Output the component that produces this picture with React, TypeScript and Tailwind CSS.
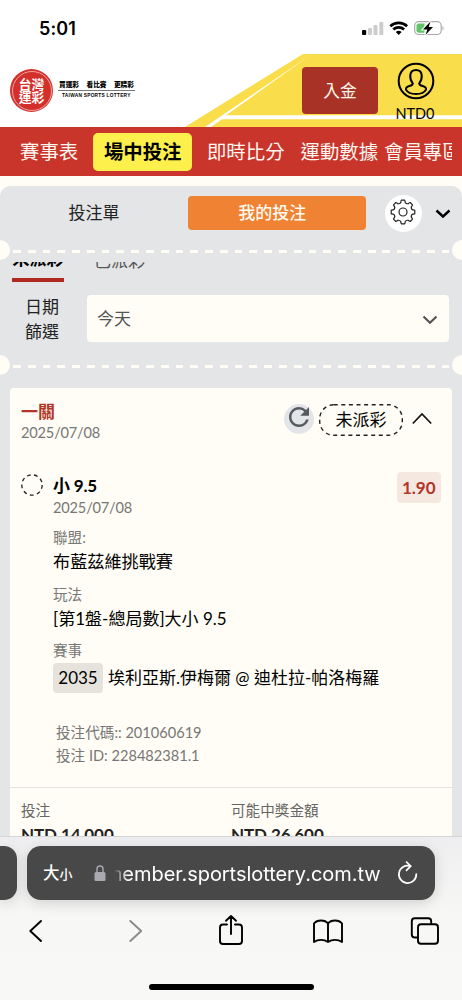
import React from "react";

const polar = (deg: number, r: number) => {
  const a = (deg * Math.PI) / 180;
  return `${(13 + r * Math.cos(a)).toFixed(2)} ${(13 + r * Math.sin(a)).toFixed(2)}`;
};

const gearPath =
  Array.from({ length: 8 }, (_, i) => {
    const a = i * 45;
    return `${i === 0 ? "M" : "L"}${polar(a - 8, 11.9)}L${polar(a + 8, 11.9)}Q${polar(a + 12, 11)} ${polar(a + 12, 10)}Q${polar(a + 22.5, 8.4)} ${polar(a + 33, 10)}Q${polar(a + 33, 11)} ${polar(a + 37, 11.9)}`;
  }).join("") + "z";

const Notches = () => (
  <div className="relative flex h-5 items-center overflow-hidden">
    <span className="h-5 w-2.5 rounded-r-full bg-[#fffdf5]" />
    <span className="mt-[2px] ml-[2.7px] h-[3px] w-[438px] bg-[repeating-linear-gradient(90deg,#fffdf5_0px,#fffdf5_7.8px,transparent_7.8px,transparent_14.78px)]" />
    <span className="absolute right-0 h-5 w-2.5 rounded-l-full bg-[#fffdf5]" />
  </div>
);

const StatusBar = () => (
  <div className="flex h-[54px] shrink-0 items-start justify-between bg-white pl-[39px] pr-[18px]">
    <span className="mt-[16px] font-['Inter'] text-[18px] leading-[26px] font-semibold tracking-[0.1px] text-black">5:01</span>
    <svg className="mt-[18px]" width="82" height="20" viewBox="362 18 82 20">
      <rect x="362" y="30" width="4.200" height="5" rx="1" fill="#000" />
      <rect x="368" y="28" width="4" height="7" rx="1" fill="#ccc" />
      <rect x="373.500" y="25" width="4" height="10" rx="1" fill="#ccc" />
      <rect x="379.300" y="22" width="4" height="13" rx="1" fill="#ccc" />
      <g fill="none" stroke="#000" strokeWidth="2.700">
        <path d="M390.300 26.200a12.300 12.300 0 0 1 16.800 0" />
        <path d="M393.300 29.500a7.900 7.900 0 0 1 10.800 0" />
      </g>
      <path d="M395.800 32.100a4.200 4.200 0 0 1 5.800 0L398.700 35z" fill="#000" />
      <rect x="414.700" y="21.700" width="26.500" height="12.800" rx="4" fill="#fff" stroke="#aaa" strokeWidth="1.200" />
      <path d="M419 23.500h5.500v9.200h-5.500a2.500 2.500 0 0 1-2.500-2.500v-4.200a2.500 2.500 0 0 1 2.500-2.500z" fill="#5fc466" />
      <path d="M442.500 26v4.400c1.500-.7 1.500-3.700 0-4.400z" fill="#aaa" />
      <path d="M430.500 21.500l-7.500 8h4.300l-1.800 5.500 7.500-8h-4.300z" fill="#000" stroke="#fff" strokeWidth="2.200" paintOrder="stroke" />
    </svg>
  </div>
);

const Header = () => (
  <header className="relative flex h-[73px] shrink-0 bg-white">
    <svg className="absolute inset-0" width="462" height="73" viewBox="0 54 462 73">
      <path d="M303 54H462V127H185z" fill="#fadd4a" />
      <path d="M312 54L226 115.300H462V119.200H222L211 127H205z" fill="#fff" />
    </svg>
    <div className="relative ml-[10px] mt-[15px] flex h-[43px] w-[43px] flex-col items-center rounded-full bg-[#d32f2b] pt-[8px] font-['Noto_Sans_CJK_TC',sans-serif] text-[12.800px] leading-[13px] font-bold text-white">
      <span className="absolute inset-[1.5px] rounded-full border border-[#f0a5a0]" />
      <span>台灣</span>
      <span>運彩</span>
    </div>
    <div className="relative ml-[5px] mt-[21px] w-[77px] font-['Noto_Sans_CJK_TC',sans-serif] text-black">
      <div className="flex h-[16px] items-center justify-between border-b border-[#777] px-[1px] pt-[2px] text-[6.700px] leading-[14px] font-black whitespace-nowrap">
        <span>買運彩</span>
        <span>看比賽</span>
        <span>更精彩</span>
      </div>
      <div className="pl-[4px] font-['Liberation_Sans'] text-[4.800px] leading-[9px] font-bold tracking-[0.260px] whitespace-nowrap">TAIWAN SPORTS LOTTERY</div>
    </div>
    <button className="relative ml-[167px] mt-[13px] h-[47px] w-[76px] rounded-[4px] bg-[#a83226] text-[16.800px] text-[#fff5ea]">入金</button>
    <div className="relative ml-[15px] mt-[8px] flex w-[44px] flex-col items-center">
      <svg className="ml-[2px] shrink-0" width="38" height="38" viewBox="0 0 38 38" fill="none" stroke="#000" strokeWidth="2">
        <circle cx="19" cy="19" r="17.300" />
        <path d="M15.800 21.500C13.800 19 13 16 13.300 13.200 13.600 9.800 15.800 8 19 8s5.400 1.800 5.700 5.200c.3 2.800-.5 5.800-2.500 8.300.2 1.500 1.300 1.900 3.300 2.500 2.700.8 4 2 3.500 3.600-1.600 3-5.600 4.400-10 4.400s-8.400-1.400-10-4.400c-.5-1.600.8-2.800 3.500-3.600 2-.6 3.100-1 3.300-2.500z" />
      </svg>
      <span className="mt-[5px] text-[14.500px] leading-[18px] text-black">NTD0</span>
    </div>
  </header>
);

const Nav = () => (
  <nav className="flex h-[49px] shrink-0 items-center overflow-hidden bg-[#c9342b] pr-[10px] text-[19.400px] whitespace-nowrap text-[#fff8f0]">
    <div className="flex w-[452px] items-center overflow-hidden">
      <span className="ml-[20px]">賽事表</span>
      <span className="ml-[15.300px] flex h-[38px] w-[98.500px] shrink-0 items-center justify-center rounded-[5px] bg-[#fef04c] font-bold text-black">場中投注</span>
      <span className="ml-[15px]">即時比分</span>
      <span className="ml-[16px]">運動數據</span>
      <span className="ml-[6px]">會員專區</span>
    </div>
  </nav>
);

const TicketTabs = () => (
  <div className="flex h-[54px] items-start pt-[10px]">
    <span className="w-[188px] text-center text-[17px] leading-[34px] text-[#222]">投注單</span>
    <span className="h-[34px] w-[177.500px] rounded-[4px] bg-[#ef8233] pr-[9px] text-center text-[17px] leading-[34px] font-medium text-[#fffaf0]">我的投注</span>
    <span className="-mt-[1.500px] ml-[19.500px] flex h-[37px] w-[37px] items-center justify-center rounded-full bg-white">
      <svg className="-mt-[2px] -ml-px" width="26" height="26" viewBox="0 0 26 26" fill="none" stroke="#222" strokeWidth="1.200" strokeLinejoin="round">
        <circle cx="13" cy="13" r="4" />
        <path d={gearPath} />
      </svg>
    </span>
    <svg className="ml-[13px] mt-[13px]" width="16" height="10" viewBox="0 0 16 10" fill="none" stroke="#000" strokeWidth="2.400">
      <path d="M1.500 1.500L8 7.500l6.500-6" />
    </svg>
  </div>
);

const Filters = () => (
  <>
    <div className="flex h-[21.500px] overflow-hidden">
      <div className="ml-[12px] h-[19.500px] w-[52px] overflow-hidden border-b-[4px] border-[#b02a20] text-center text-[17px] leading-[24px] font-bold text-black">
        <div className="-mt-[15px]">未派彩</div>
      </div>
      <div className="ml-[30px] text-[17px] leading-[24px] text-[#555]">
        <div className="-mt-[13px]">已派彩</div>
      </div>
    </div>
    <div className="flex h-[71.500px] items-start pt-[11.500px]">
      <div className="-mt-px ml-[25px] w-[62px] text-[17px] leading-[25px] text-[#222]">
        日期
        <br />
        篩選
      </div>
      <div className="flex h-[47px] w-[361.500px] items-center justify-between rounded-[4px] bg-[#fffdf5] pr-[11px] pl-[10px] text-[17px] text-[#555]">
        <span>今天</span>
        <svg className="mt-[2px]" width="16" height="10" viewBox="0 0 16 10" fill="none" stroke="#555" strokeWidth="2.200">
          <path d="M1.500 1.500L8 7.800l6.500-6.300" />
        </svg>
      </div>
    </div>
  </>
);

const Card = () => (
  <section className="mt-[13px] ml-[10px] w-[442.300px] rounded-t-[4px] bg-[#fffdf5]">
    <div className="flex h-[71px] items-start pt-[12px] pl-[11px]">
      <div className="w-[263px] pt-px">
        <div className="text-[17px] leading-[21px] font-bold text-[#b2362a]">一關</div>
        <div className="text-[14.600px] leading-[22px] tracking-[-0.180px] text-[#777]">2025/07/08</div>
      </div>
      <span className="mt-[4px] flex h-[30px] w-[30px] items-center justify-center rounded-full bg-[#e3e5e8]">
        <svg className="-mt-[4px] -ml-px shrink-0" width="30" height="30" viewBox="0 0 24 24">
          <path d="M17.650 6.350A7.960 7.960 0 0 0 12 4c-4.420 0-7.990 3.580-7.990 8s3.570 8 7.990 8c3.730 0 6.840-2.550 7.730-6h-2.080A5.990 5.990 0 0 1 12 18c-3.310 0-6-2.690-6-6s2.690-6 6-6c1.660 0 3.140.69 4.220 1.780L13 11h7V4z" fill="#555b5e" />
        </svg>
      </span>
      <span className="relative ml-[5px] mt-[4px] flex h-[32px] w-[84px] items-center justify-center text-[17px] text-black">
        <svg className="absolute inset-0" width="84" height="32" fill="none" stroke="#222" strokeWidth="1.400">
          <rect x=".7" y=".7" width="82.600" height="30.600" rx="14" strokeDasharray="4 3.600" />
        </svg>
        未派彩
      </span>
      <svg className="ml-[9px] mt-[12px]" width="20" height="14" viewBox="0 0 20 14" fill="none" stroke="#111" strokeWidth="1.700">
        <path d="M.8 11.500L10 2l9.200 9.500" />
      </svg>
    </div>
    <div className="flex h-[77px] items-start pt-[12px] pl-[11px]">
      <svg className="mt-[3px]" width="22" height="22" fill="none" stroke="#222" strokeWidth="1.300">
        <circle cx="11" cy="11" r="10.200" strokeDasharray="3.800 3.320" />
      </svg>
      <div className="ml-[10px] w-[344.500px]">
        <div className="pt-[4px] text-[17px] leading-[22px] font-bold tracking-[-0.2px] text-black">小 9.5</div>
        <div className="text-[14.600px] leading-[22px] tracking-[-0.180px] text-[#777]">2025/07/08</div>
      </div>
      <span className="mt-px -ml-[0.5px] h-[31px] w-[43.500px] rounded-[4px] bg-[#f4e8e0] text-center text-[17px] leading-[31px] font-bold text-[#b2362a]">1.90</span>
    </div>
    <div className="pl-[43px] whitespace-nowrap">
      <div className="-mt-[9px] text-[14.600px] leading-[22px] text-[#777]">聯盟:</div>
      <div className="text-[17.150px] leading-[26px] text-black">布藍茲維挑戰賽</div>
      <div className="mt-[9px] text-[14.600px] leading-[22px] text-[#777]">玩法</div>
      <div className="text-[17px] leading-[26px] text-black">[第1盤-總局數]大小 9.5</div>
      <div className="mt-[8px] text-[14.600px] leading-[22px] text-[#777]">賽事</div>
      <div className="mt-px flex h-[30px] items-center text-[17px] text-black">
        <span className="mr-[5px] w-[50px] rounded-[4px] bg-[#e6e3dd] text-center leading-[30px]">2035</span>
        埃利亞斯.伊梅爾 @ 迪杜拉-帕洛梅羅
      </div>
      <div className="mt-[29px] pl-[3px] text-[14.600px] leading-[22.500px] text-[#777]">
        <div>投注代碼:: 201060619</div>
        <div>投注 ID: 228482381.1</div>
      </div>
    </div>
    <div className="mt-[20px] flex border-t border-[#e4e2dc] pt-[10.500px] pl-[11px]">
      {[["投注", "NTD 14,000"], ["可能中獎金額", "NTD 26,600"]].map(([k, v]) => (
        <div key={k} className="w-[210px]">
          <div className="text-[14.600px] leading-[24px] text-[#666]">{k}</div>
          <div className="text-[17px] leading-[24px] font-bold tracking-[-0.1px] text-[#222]">{v}</div>
        </div>
      ))}
    </div>
  </section>
);

const BrowserBar = () => (
  <footer className="flex h-[164px] shrink-0 flex-col border-t border-[#d4d4d4] bg-gradient-to-b from-[#eeeef0] via-[#f7f7f5] via-50% to-[#f8f8f6]">
    <div className="mt-[9px] flex h-[54px] items-stretch font-['Inter','Noto_Sans_CJK_TC',sans-serif] text-white">
      <span className="w-[17px] rounded-r-[13px] bg-[#484848] shadow-[0_3px_14px_rgba(0,0,0,0.15)]" />
      <div className="ml-[10px] flex w-[408px] items-center rounded-[14px] bg-[#484848] shadow-[0_3px_14px_rgba(0,0,0,0.15)]">
        <span className="ml-[16px] w-[51px] text-[16.500px] font-medium">大<span className="text-[13px]">小</span></span>
        <svg width="12" height="18" viewBox="0 0 12 18">
          <path d="M3 9V5a3 3 0 0 1 6 0v4" fill="none" stroke="#aaa8b0" strokeWidth="1.400" />
          <rect x=".5" y="8" width="11" height="9" rx="1.500" fill="#aaa8b0" />
        </svg>
        <span className="mt-px ml-[7.500px] flex w-[267px] justify-end overflow-hidden [mask-image:linear-gradient(90deg,transparent,#000_14px)] text-[20px] leading-[28px] tracking-[-0.050px] whitespace-nowrap">member.sportslottery.com.tw</span>
        <svg className="ml-[16px]" width="22" height="26" viewBox="0 0 22 26" fill="none" stroke="#fff" strokeWidth="1.700" strokeLinecap="round" strokeLinejoin="round">
          <path d="M13.500 6.200A8.700 8.700 0 1 0 19.300 14" />
          <path d="M9.500 2l4.200 4.200-4.200 4.200" />
        </svg>
      </div>
    </div>
    <div className="mt-[11px] flex h-[40px] items-center">
      <svg width="462" height="40" viewBox="0 911 462 40" fill="none" stroke="#000" strokeWidth="1.900" strokeLinecap="round" strokeLinejoin="round">
        <path d="M41 921L30.300 931 41 941" />
        <path d="M130.300 921l10.900 10-10.900 10" stroke="#8a8a88" />
        <path d="M227 924.500h-4a3 3 0 0 0-3 3V941a3 3 0 0 0 3 3h16a3 3 0 0 0 3-3v-13.500a3 3 0 0 0-3-3h-4M231 934v-17.500M226 920.800l5-4.800 5 4.800" />
        <path d="M328 923.500c-3-4-11-4-14 0V942c4-2.800 10-2.800 14 0 4-2.800 10-2.800 14 0v-18.500c-3-4-11-4-14 0zM328 923.500V942" />
        <path d="M417.500 937.500h-2.700a3 3 0 0 1-3-3V921.300a3 3 0 0 1 3-3h13.400a3 3 0 0 1 3 3v2.700" />
        <rect x="418" y="924.300" width="20" height="19.500" rx="3" />
      </svg>
    </div>
    <div className="mx-auto mt-[33px] h-[6px] w-[165px] rounded-full bg-black" />
  </footer>
);

export default function App() {
  return (
    <main className="flex h-[1000px] w-[462px] flex-col overflow-hidden bg-[#fffdf5] font-['Lato','Noto_Sans_CJK_TC',sans-serif]">
      <StatusBar />
      <Header />
      <Nav />
      <div className="mt-[10px] min-h-0 flex-1 overflow-hidden rounded-t-[10px] bg-[#e3e5e7]">
        <TicketTabs />
        <Notches />
        <div className="h-[2px]" />
        <Filters />
        <Notches />
        <Card />
      </div>
      <BrowserBar />
    </main>
  );
}
